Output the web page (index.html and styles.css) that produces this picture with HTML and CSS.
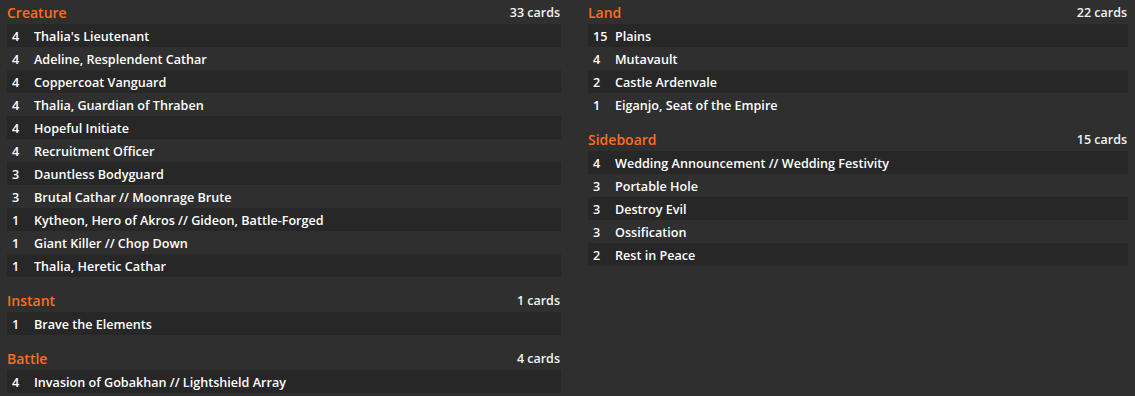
FILE: index.html
```html
<!DOCTYPE html>
<html>
<head>
<meta charset="utf-8">
<link rel="stylesheet" href="styles.css">
</head>
<body>
<div class="deck">
  <div class="col col-left">
    <section class="group">
      <div class="group-head"><span class="type">Creature</span><span class="count">33 cards</span></div>
      <div class="row"><span class="qty">4</span><span class="name">Thalia's Lieutenant</span></div>
      <div class="row"><span class="qty">4</span><span class="name">Adeline, Resplendent Cathar</span></div>
      <div class="row"><span class="qty">4</span><span class="name">Coppercoat Vanguard</span></div>
      <div class="row"><span class="qty">4</span><span class="name">Thalia, Guardian of Thraben</span></div>
      <div class="row"><span class="qty">4</span><span class="name">Hopeful Initiate</span></div>
      <div class="row"><span class="qty">4</span><span class="name">Recruitment Officer</span></div>
      <div class="row"><span class="qty">3</span><span class="name">Dauntless Bodyguard</span></div>
      <div class="row"><span class="qty">3</span><span class="name">Brutal Cathar // Moonrage Brute</span></div>
      <div class="row"><span class="qty">1</span><span class="name">Kytheon, Hero of Akros // Gideon, Battle-Forged</span></div>
      <div class="row"><span class="qty">1</span><span class="name">Giant Killer // Chop Down</span></div>
      <div class="row"><span class="qty">1</span><span class="name">Thalia, Heretic Cathar</span></div>
    </section>
    <section class="group">
      <div class="group-head"><span class="type">Instant</span><span class="count">1 cards</span></div>
      <div class="row"><span class="qty">1</span><span class="name">Brave the Elements</span></div>
    </section>
    <section class="group">
      <div class="group-head"><span class="type">Battle</span><span class="count">4 cards</span></div>
      <div class="row"><span class="qty">4</span><span class="name">Invasion of Gobakhan // Lightshield Array</span></div>
    </section>
  </div>
  <div class="col col-right">
    <section class="group">
      <div class="group-head"><span class="type">Land</span><span class="count">22 cards</span></div>
      <div class="row"><span class="qty">15</span><span class="name">Plains</span></div>
      <div class="row"><span class="qty">4</span><span class="name">Mutavault</span></div>
      <div class="row"><span class="qty">2</span><span class="name">Castle Ardenvale</span></div>
      <div class="row"><span class="qty">1</span><span class="name">Eiganjo, Seat of the Empire</span></div>
    </section>
    <section class="group">
      <div class="group-head"><span class="type">Sideboard</span><span class="count">15 cards</span></div>
      <div class="row"><span class="qty">4</span><span class="name">Wedding Announcement // Wedding Festivity</span></div>
      <div class="row"><span class="qty">3</span><span class="name">Portable Hole</span></div>
      <div class="row"><span class="qty">3</span><span class="name">Destroy Evil</span></div>
      <div class="row"><span class="qty">3</span><span class="name">Ossification</span></div>
      <div class="row"><span class="qty">2</span><span class="name">Rest in Peace</span></div>
    </section>
  </div>
</div>
</body>
</html>
```
FILE: styles.css
```css
html, body {
  margin: 0;
  padding: 0;
  background: #2f2f2f;
  height: 100%;
  overflow: hidden;
}
body {
  font-family: "Open Sans", "Noto Sans", sans-serif;
  font-weight: 600;
  color: #ffffff;
}
.deck {
  display: grid;
  grid-template-columns: 554px 540px;
  column-gap: 27px;
  padding-left: 7px;
}
.group + .group {
  margin-top: 11px;
}
.group-head {
  height: 24px;
  display: flex;
  align-items: center;
  justify-content: space-between;
}
.type {
  color: #ff6c1a;
  font-size: 14px;
}
.count {
  font-size: 12.5px;
  color: #f2f2f2;
  padding-right: 1px;
}
.row {
  height: 23px;
  display: flex;
  align-items: center;
  font-size: 12.6px;
  padding-left: 5px;
  padding-top: 1px;
  box-sizing: border-box;
}
.row:nth-child(even) {
  background: #272727;
}
.qty {
  width: 22px;
  flex: none;
}
```
